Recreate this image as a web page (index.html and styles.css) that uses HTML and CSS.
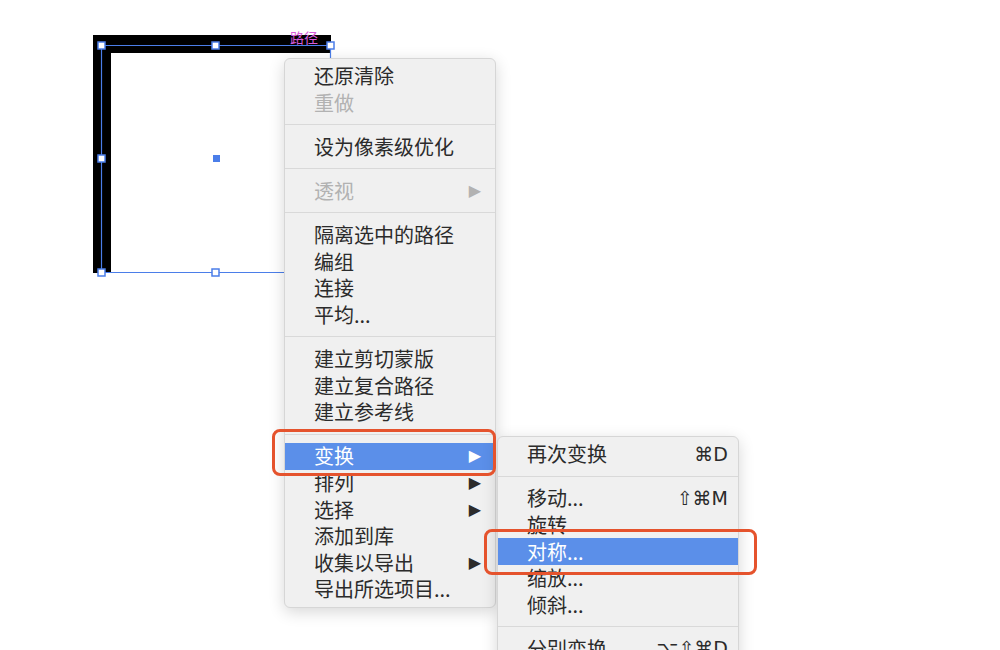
FILE: index.html
```html
<!DOCTYPE html>
<html lang="zh-CN">
<head>
    <meta charset="UTF-8">
    <title>变换菜单</title>
    <link rel="stylesheet" href="styles.css">
</head>
<body>
    <div class="canvas">
        <svg class="art" width="1000" height="650" viewBox="0 0 1000 650">
            <rect x="93" y="35" width="238" height="18" fill="#000"/>
            <rect x="93" y="35" width="18" height="238" fill="#000"/>
            <g fill="none" stroke="#4b7ee9" stroke-width="1.2">
                <line x1="101.5" y1="45.5" x2="330.5" y2="45.5"/>
                <line x1="101.5" y1="45.5" x2="101.5" y2="272.5"/>
                <line x1="101.5" y1="272.5" x2="330.5" y2="272.5"/>
                <line x1="330.5" y1="45.5" x2="330.5" y2="272.5"/>
            </g>
            <g fill="#fff" stroke="#4b7ee9" stroke-width="1.5">
                <rect x="98" y="42" width="7" height="7"/>
                <rect x="212" y="42" width="7" height="7"/>
                <rect x="327" y="42" width="7" height="7"/>
                <rect x="98" y="155" width="7" height="7"/>
                <rect x="98" y="269" width="7" height="7"/>
                <rect x="212" y="269" width="7" height="7"/>
            </g>
            <rect x="213" y="155" width="7" height="7" fill="#4b7ee9"/>
            <text x="290" y="43" class="pathLabel">路径</text>
        </svg>

        <div class="menu mainMenu">
            <div class="item">还原清除</div>
            <div class="item off">重做</div>
            <div class="sep"></div>
            <div class="item">设为像素级优化</div>
            <div class="sep"></div>
            <div class="item off">透视<span class="arrow">▶</span></div>
            <div class="sep"></div>
            <div class="item">隔离选中的路径</div>
            <div class="item">编组</div>
            <div class="item">连接</div>
            <div class="item">平均...</div>
            <div class="sep"></div>
            <div class="item">建立剪切蒙版</div>
            <div class="item">建立复合路径</div>
            <div class="item">建立参考线</div>
            <div class="sep"></div>
            <div class="item on">变换<span class="arrow">▶</span></div>
            <div class="item">排列<span class="arrow">▶</span></div>
            <div class="item">选择<span class="arrow">▶</span></div>
            <div class="item">添加到库</div>
            <div class="item">收集以导出<span class="arrow">▶</span></div>
            <div class="item">导出所选项目...</div>
        </div>

        <div class="menu subMenu">
            <div class="item">再次变换<span class="key">⌘D</span></div>
            <div class="sep"></div>
            <div class="item">移动...<span class="key">⇧⌘M</span></div>
            <div class="item">旋转</div>
            <div class="item on">对称...</div>
            <div class="item">缩放...</div>
            <div class="item">倾斜...</div>
            <div class="sep"></div>
            <div class="item">分别变换<span class="key">⌥⇧⌘D</span></div>
        </div>

        <div class="mark markOne"></div>
        <div class="mark markTwo"></div>
    </div>
</body>
</html>
```

FILE: styles.css
```css
* {
    box-sizing: border-box;
    margin: 0;
    padding: 0;
}
body {
    background: #fff;
    font-family: "Noto Sans CJK SC", "Noto Sans", sans-serif;
}
.canvas {
    position: relative;
    width: 1000px;
    height: 650px;
    overflow: hidden;
}
.art {
    display: block;
}
.pathLabel {
    font-family: "Noto Sans CJK SC", sans-serif;
    font-size: 14px;
    fill: #d65ad8;
}
.menu {
    position: absolute;
    background: #f0f0f0;
    border: 1px solid #d6d6d6;
    border-radius: 6px;
    padding: 4px 0;
    box-shadow: 0 4px 16px rgba(0,0,0,0.16);
}
.mainMenu {
    left: 284px;
    top: 58px;
    width: 212px;
}
.subMenu {
    left: 497px;
    top: 436px;
    width: 242px;
}
.item {
    display: flex;
    align-items: center;
    justify-content: space-between;
    height: 26.6px;
    padding: 0 14px 0 29px;
    font-size: 20px;
    line-height: 1;
    color: #2b2b2b;
    white-space: nowrap;
}
.item.off {
    color: #b2b2b2;
}
.item.on {
    background: #5b8fe9;
    color: #fff;
}
.arrow {
    font-family: "DejaVu Sans", sans-serif;
    font-size: 16px;
    color: #2b2b2b;
}
.item.off .arrow {
    color: #b2b2b2;
}
.item.on .arrow {
    color: #fff;
}
.subMenu .item {
    padding: 0 10px 0 29px;
}
.key {
    font-family: "DejaVu Sans", sans-serif;
    font-size: 19px;
    color: #2b2b2b;
}
.sep {
    height: 1px;
    margin: 8px 0 8.5px;
    background: #d9d9d9;
}
.mark {
    position: absolute;
    border: 3px solid #e5532d;
    border-radius: 8px;
}
.markOne {
    left: 272px;
    top: 429px;
    width: 224px;
    height: 47px;
}
.markTwo {
    left: 484px;
    top: 529px;
    width: 273px;
    height: 46px;
}
```
